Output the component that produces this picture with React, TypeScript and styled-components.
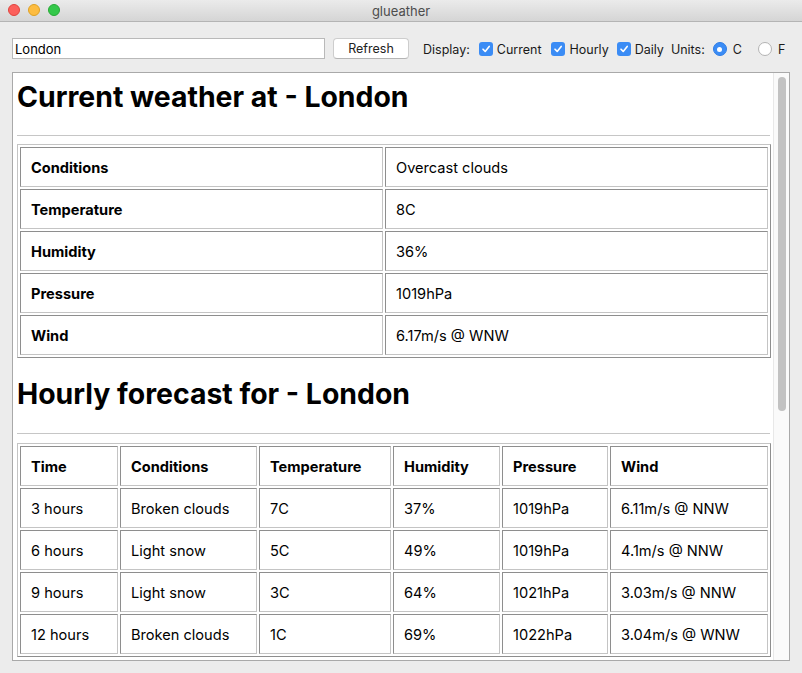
import styled, { createGlobalStyle } from "styled-components";

const GlobalStyle = createGlobalStyle`
	html, body {
		margin: 0;
		padding: 0;
		overflow: hidden;
		background: #ececec;
	}
`;

const Window = styled.div`
	width: 802px;
	height: 673px;
	display: flex;
	flex-direction: column;
	background: #ececec;
	font-family: Inter, "Liberation Sans", sans-serif;
	color: #000;
`;

const TitleBar = styled.div`
	position: relative;
	flex-shrink: 0;
	height: 22px;
	box-sizing: border-box;
	background: linear-gradient(#ebebeb, #d5d5d5);
	border-bottom: 1px solid #b4b4b4;
	display: flex;
	align-items: center;
	justify-content: center;
	font-size: 13px;
	color: #4d4d4d;
`;

const Lights = styled.div`
	position: absolute;
	left: 8px;
	top: 4px;
	display: flex;
	gap: 8px;
`;

const Light = styled.span<{ $fill: string; $edge: string }>`
	width: 12px;
	height: 12px;
	border-radius: 50%;
	box-sizing: border-box;
	background: ${(p) => p.$fill};
	border: 1px solid ${(p) => p.$edge};
`;

const Toolbar = styled.div`
	flex-shrink: 0;
	display: flex;
	align-items: center;
	height: 21px;
	padding: 16px 12px 13px 12px;
	font-size: 12.5px;
	color: #1a1a1a;

	> * {
		flex-shrink: 0;
	}
`;

const CityInput = styled.div`
	width: 313px;
	height: 21px;
	box-sizing: border-box;
	background: #fff;
	border: 1px solid #b9b9b9;
	padding-left: 2px;
	display: flex;
	align-items: center;
	font-size: 13px;
	color: #000;
`;

const Button = styled.div`
	margin-left: 8px;
	width: 76px;
	height: 21px;
	box-sizing: border-box;
	background: #fff;
	border: 1px solid #cdcdcd;
	border-bottom-color: #b5b5b5;
	border-radius: 4px;
	display: flex;
	align-items: center;
	justify-content: center;
	font-size: 12.5px;
	color: #222;
`;

const Label = styled.span<{ $gap: number }>`
	margin-left: ${(p) => p.$gap}px;
	padding-top: 1px;
`;

const Option = styled.span<{ $gap: number; $text?: number }>`
	display: inline-flex;
	align-items: center;
	gap: ${(p) => p.$text ?? 4}px;
	margin-left: ${(p) => p.$gap}px;
	padding-top: 1px;
`;

const CheckBox = styled.span`
	width: 14px;
	height: 14px;
	border-radius: 3px;
	background: #3b8cf5;
	display: inline-flex;
	align-items: center;
	justify-content: center;
`;

const Radio = styled.span<{ $on: boolean }>`
	width: 14px;
	height: 14px;
	box-sizing: border-box;
	border-radius: 50%;
	background: ${(p) => (p.$on ? "#3b8cf5" : "#fff")};
	border: 1px solid ${(p) => (p.$on ? "#2f7de6" : "#b3b3b3")};
	display: inline-flex;
	align-items: center;
	justify-content: center;

	&::after {
		content: "";
		display: ${(p) => (p.$on ? "block" : "none")};
		width: 5px;
		height: 5px;
		border-radius: 50%;
		background: #fff;
	}
`;

const Frame = styled.div`
	height: 589px;
	flex-shrink: 0;
	box-sizing: border-box;
	margin: 0 12px;
	border: 1px solid #a9a9a9;
	background: #fff;
	display: flex;
	overflow: hidden;
`;

const Doc = styled.div`
	flex: 1;
	overflow: hidden;
	padding: 0 3px 0 4px;
`;

const Track = styled.div`
	width: 15px;
	background: #fafafa;
	border-left: 1px solid #e8e8e8;
	padding-top: 4px;
	display: flex;
	justify-content: center;
`;

const Thumb = styled.div`
	width: 8px;
	height: 334px;
	border-radius: 4px;
	background: #c2c2c2;
`;

const Heading = styled.h1<{ $top: number; $bottom: number }>`
	margin: ${(p) => p.$top}px 0 ${(p) => p.$bottom}px 0;
	font-size: 28.4px;
	line-height: 34px;
	font-weight: 700;
`;

const Rule = styled.hr<{ $after: number }>`
	margin: 0 0 ${(p) => p.$after}px 0;
	border: none;
	border-top: 1px solid #c6c6c6;
	height: 0;
`;

const Table = styled.table`
	width: 754px;
	table-layout: fixed;
	border-collapse: separate;
	border-spacing: 2px;
	border: 1px solid;
	border-color: #c4c4c4 #8e8e8e #8e8e8e #c4c4c4;
	font-size: 14.6px;
`;

const Cell = styled.td<{ $bold?: boolean }>`
	box-sizing: border-box;
	height: 40px;
	padding: 2px 0 0 10px;
	border: 1px solid;
	border-color: #8e8e8e #c4c4c4 #c4c4c4 #8e8e8e;
	font-weight: ${(p) => (p.$bold ? 700 : 400)};
	text-align: left;
	vertical-align: middle;
	white-space: nowrap;
`;

const Check = () => (
	<svg width="10" height="10" viewBox="0 0 10 10">
		<path d="M2 5.2 L4.2 7.4 L8.2 2.4" fill="none" stroke="#fff" strokeWidth="1.6" strokeLinecap="round" strokeLinejoin="round" />
	</svg>
);

const current: [string, string][] = [
	["Conditions", "Overcast clouds"],
	["Temperature", "8C"],
	["Humidity", "36%"],
	["Pressure", "1019hPa"],
	["Wind", "6.17m/s @ WNW"],
];

const hourlyCols = [98, 137, 132, 107, 106, 158];
const hourlyHead = ["Time", "Conditions", "Temperature", "Humidity", "Pressure", "Wind"];
const hourly = [
	["3 hours", "Broken clouds", "7C", "37%", "1019hPa", "6.11m/s @ NNW"],
	["6 hours", "Light snow", "5C", "49%", "1019hPa", "4.1m/s @ NNW"],
	["9 hours", "Light snow", "3C", "64%", "1021hPa", "3.03m/s @ NNW"],
	["12 hours", "Broken clouds", "1C", "69%", "1022hPa", "3.04m/s @ WNW"],
];

export default function App() {
	return (
		<Window>
			<GlobalStyle />
			<TitleBar>
				<Lights>
					<Light $fill="#fc605c" $edge="#e0443e" />
					<Light $fill="#fdbc40" $edge="#dea123" />
					<Light $fill="#34c84a" $edge="#27aa35" />
				</Lights>
				glueather
			</TitleBar>
			<Toolbar>
				<CityInput>London</CityInput>
				<Button>Refresh</Button>
				<Label $gap={14}>Display:</Label>
				<Option $gap={9}>
					<CheckBox><Check /></CheckBox>Current
				</Option>
				<Option $gap={10}>
					<CheckBox><Check /></CheckBox>Hourly
				</Option>
				<Option $gap={8}>
					<CheckBox><Check /></CheckBox>Daily
				</Option>
				<Label $gap={7}>Units:</Label>
				<Option $gap={8} $text={6}>
					<Radio $on />C
				</Option>
				<Option $gap={16} $text={6}>
					<Radio $on={false} />F
				</Option>
			</Toolbar>
			<Frame>
				<Doc>
					<Heading $top={7} $bottom={21}>Current weather at - London</Heading>
					<Rule $after={8} />
					<Table>
						<colgroup>
							<col style={{ width: 363 }} />
							<col style={{ width: 383 }} />
						</colgroup>
						<tbody>
							{current.map(([k, v]) => (
								<tr key={k}>
									<Cell $bold>{k}</Cell>
									<Cell>{v}</Cell>
								</tr>
							))}
						</tbody>
					</Table>
					<Heading $top={19} $bottom={22}>Hourly forecast for - London</Heading>
					<Rule $after={9} />
					<Table>
						<colgroup>
							{hourlyCols.map((w, i) => (
								<col key={i} style={{ width: w }} />
							))}
						</colgroup>
						<tbody>
							<tr>
								{hourlyHead.map((h) => (
									<Cell key={h} $bold>{h}</Cell>
								))}
							</tr>
							{hourly.map((row) => (
								<tr key={row[0]}>
									{row.map((c, i) => (
										<Cell key={i}>{c}</Cell>
									))}
								</tr>
							))}
						</tbody>
					</Table>
				</Doc>
				<Track>
					<Thumb />
				</Track>
			</Frame>
		</Window>
	);
}
